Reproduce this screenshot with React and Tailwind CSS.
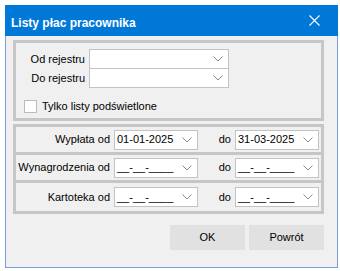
import React from "react";

function Chevron() {
  return (
    <svg width="10" height="6" viewBox="0 0 10 6" className="absolute right-[5px] top-1/2 -translate-y-1/2">
      <polyline points="0.5,0.5 5,5 9.5,0.5" fill="none" stroke="#8a8a8a" strokeWidth="1" />
    </svg>
  );
}

function Combo({ value, className = "" }) {
  return (
    <div className={`relative flex h-[20px] items-center border border-[#c3c3c3] bg-white pl-[2px] ${className}`}>
      <span className="whitespace-pre">{value}</span>
      <Chevron />
    </div>
  );
}

function DateRow({ label, from, to }) {
  return (
    <div className="flex h-[28px] items-center">
      <span className="w-[94px] text-right">{label}</span>
      <Combo value={from} className="ml-[4px] w-[84px]" />
      <span className="w-[33px] text-right">do</span>
      <Combo value={to} className="ml-[4px] w-[84px]" />
    </div>
  );
}

export default function App() {
  const empty = "__-__-____";
  return (
    <div className="h-[271px] w-[340px] bg-white pl-[5px] pt-[5px] font-['Liberation_Sans',Arial,sans-serif] text-[11px] text-black">
      <div className="flex h-[263px] w-[333px] flex-col border-x border-b border-[#7a9fd6] bg-[#f0f0f0]">
        {/* Title bar */}
        <div className="-mx-px flex h-[31px] items-center justify-between bg-[#0078d7] pl-[6px] pr-[18px]">
          <span className="mt-[4px] text-[12px] font-bold text-white">Listy płac pracownika</span>
          <svg width="11" height="11" viewBox="0 0 11 11">
            <path d="M0.5 0.5 L10.5 10.5 M10.5 0.5 L0.5 10.5" stroke="#ffffff" strokeWidth="1.1" />
          </svg>
        </div>

        <div className="pl-[7px] pt-[4px]">
          {/* Register group */}
          <div className="h-[81px] w-[311px] border-[3px] border-[#c6c6c6] pt-[6px]">
            <div className="flex items-center">
              <span className="w-[69px] text-right">Od rejestru</span>
              <Combo value="" className="ml-[4px] w-[140px]" />
            </div>
            <div className="-mt-px flex items-center">
              <span className="w-[69px] text-right">Do rejestru</span>
              <Combo value="" className="ml-[4px] w-[140px]" />
            </div>
            <div className="ml-[8px] mt-[10px] flex items-center">
              <div className="h-[13px] w-[13px] border border-[#bcbcbc] bg-white" />
              <span className="ml-[5px]">Tylko listy podświetlone</span>
            </div>
          </div>

          {/* Date ranges */}
          <div className="mt-[3px] w-[311px] divide-y-[3px] divide-[#c6c6c6] border-[3px] border-[#c6c6c6]">
            <DateRow label="Wypłata od" from="01-01-2025" to="31-03-2025" />
            <DateRow label="Wynagrodzenia od" from={empty} to={empty} />
            <DateRow label="Kartoteka od" from={empty} to={empty} />
          </div>

          {/* Buttons */}
          <div className="mt-[11px] flex w-[311px] justify-end gap-[4px]">
            <button className="h-[25px] w-[75px] bg-[#e1e1e1]">OK</button>
            <button className="h-[25px] w-[75px] bg-[#e1e1e1]">Powrót</button>
          </div>
        </div>
      </div>
    </div>
  );
}
